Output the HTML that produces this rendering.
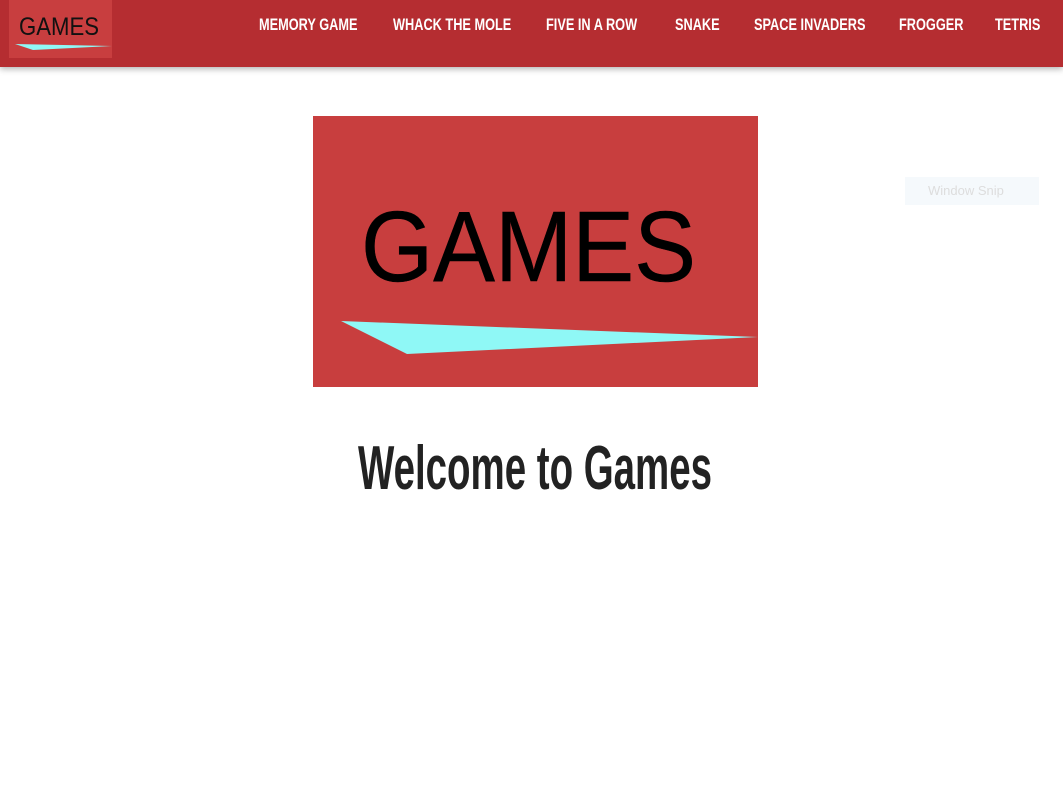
<!DOCTYPE html>
<html><head><style>
body{margin:0;width:1063px;height:806px;background:#fff;overflow:hidden;font-family:"Liberation Sans",sans-serif;position:relative}
.nav{position:absolute;left:0;top:0;width:1063px;height:67px;background:#b52d31;box-shadow:0 2px 6px rgba(0,0,0,.3)}
.logo{position:absolute;left:9px;top:0;width:103px;height:58px;background:#c83e3f}
.nav a{position:absolute;top:14px;color:#fff;font-weight:bold;font-size:17px;text-decoration:none;white-space:nowrap;line-height:22px;transform:scaleX(.75);transform-origin:0 0}
.big{position:absolute;left:313px;top:116px;width:445px;height:271px;background:#c83e3e}
h1{position:absolute;left:0;width:1070px;top:432px;margin:0;text-align:center;font-size:62px;font-weight:bold;color:#222;line-height:74px;transform:scaleX(.62);transform-origin:535px 0}
.snip{position:absolute;left:905px;top:177px;width:134px;height:28px;background:#f5f9fc;color:#ddd;font-size:13px;line-height:28px;box-sizing:border-box;padding-left:23px}
</style></head><body>
<div class="nav">
 <div class="logo"><svg width="103" height="58">
  <text x="10" y="35" font-family="Liberation Sans,sans-serif" font-size="25" fill="#111" textLength="80" lengthAdjust="spacingAndGlyphs">GAMES</text>
  <polygon points="6,44 103,46 24,50" fill="#8ff8f6"/></svg></div>
 <a style="left:259px">MEMORY GAME</a>
 <a style="left:393px">WHACK THE MOLE</a>
 <a style="left:546px">FIVE IN A ROW</a>
 <a style="left:675px">SNAKE</a>
 <a style="left:754px">SPACE INVADERS</a>
 <a style="left:899px">FROGGER</a>
 <a style="left:995px">TETRIS</a>
</div>
<div class="big"><svg width="445" height="271">
 <text x="48" y="165" font-family="Liberation Sans,sans-serif" font-size="100" fill="#000" stroke="#000" stroke-width="0.5" textLength="335" lengthAdjust="spacingAndGlyphs">GAMES</text>
 <polygon points="28,205 445,221 94,238" fill="#8ff8f6"/></svg></div>
<h1>Welcome to Games</h1>
<div class="snip">Window Snip</div>
</body></html>
